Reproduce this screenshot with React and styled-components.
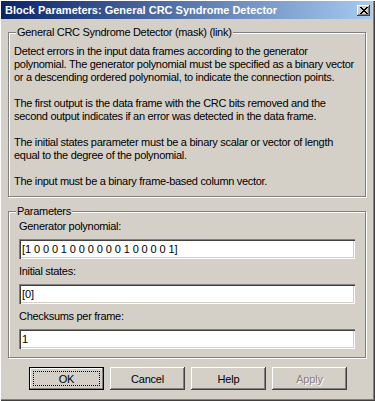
import React from 'react';
import styled, { createGlobalStyle } from 'styled-components';

const GlobalStyle = createGlobalStyle`
  html, body {
    margin: 0;
    padding: 0;
    background: #d4d0c8;
  }
  * {
    box-sizing: border-box;
  }
`;

const FONT = `"Liberation Sans", Arial, sans-serif`;

const Window = styled.div`
  width: 375px;
  height: 401px;
  display: flex;
  flex-direction: column;
  padding: 1px 3px 2px 1px;
  background: #d4d0c8;
  box-shadow: inset 1px 1px 0 #fff, inset -1px -1px 0 #404040, inset -2px -2px 0 #808080;
  font: 11px/13px ${FONT};
  letter-spacing: -0.3px;
  color: #000;
`;

const TitleBar = styled.div`
  height: 18px;
  display: flex;
  align-items: center;
  justify-content: space-between;
  padding: 0 2px 0 4px;
  background: linear-gradient(to right, #0a246a, #a6caf0);
`;

const Title = styled.span`
  color: #fff;
  font: bold 11px/13px ${FONT};
  letter-spacing: 0;
  white-space: nowrap;
`;

const CloseButton = styled.div`
  width: 13px;
  height: 11px;
  display: flex;
  align-items: center;
  justify-content: center;
  background: #d4d0c8;
  box-shadow: inset -1px -1px 0 #404040, inset 1px 1px 0 #fff, inset -2px -2px 0 #808080;
`;

const Body = styled.div`
  flex: 1;
  display: flex;
  flex-direction: column;
  padding: 13px 6px 0 7px;
`;

const Group = styled.div`
  position: relative;
  margin-top: ${p => p.$gap || 0}px;
  padding: ${p => p.$pad};
  border: 1px solid #808080;
  box-shadow: inset 1px 1px 0 #fff, 1px 1px 0 #fff;
`;

const Legend = styled.span`
  position: absolute;
  top: -7px;
  left: 7px;
  padding: 0 1px;
  background: #d4d0c8;
  white-space: nowrap;
`;

const Para = styled.p`
  margin: 0 0 13px;
  white-space: nowrap;
  &:last-child {
    margin-bottom: 0;
  }
`;

const Field = styled.div`
  display: flex;
  flex-direction: column;
  gap: 6px;
  margin-bottom: 6px;
  &:last-child {
    margin-bottom: 0;
  }
`;

const Label = styled.label`
  white-space: nowrap;
`;

const TextInput = styled.input`
  width: 100%;
  height: 20px;
  margin: 0;
  padding: 0 3px;
  border: none;
  outline: none;
  background: #fff;
  font: 11px ${FONT};
  letter-spacing: -0.1px;
  color: #000;
  box-shadow: inset 1px 1px 0 #808080, inset 2px 2px 0 #404040, inset -1px -1px 0 #fff, inset -2px -2px 0 #d4d0c8;
`;

const ButtonRow = styled.div`
  display: flex;
  justify-content: center;
  gap: 6px;
  margin-top: 9px;
  padding-left: 2px;
`;

const Button = styled.button`
  position: relative;
  width: 75px;
  height: 23px;
  margin: 0;
  padding: 0;
  border: none;
  background: #d4d0c8;
  font: 11px ${FONT};
  letter-spacing: -0.2px;
  color: ${p => (p.disabled ? '#808080' : '#000')};
  text-shadow: ${p => (p.disabled ? '1px 1px 0 #fff' : 'none')};
  box-shadow: ${p =>
    p.$default
      ? 'inset 0 0 0 1px #000, inset -2px -2px 0 #808080, inset 2px 2px 0 #fff'
      : 'inset -1px -1px 0 #404040, inset 1px 1px 0 #fff, inset -2px -2px 0 #808080'};

  &::after {
    content: '';
    display: ${p => (p.$default ? 'block' : 'none')};
    position: absolute;
    inset: 4px;
    border: 1px dotted #000;
  }
`;

const paragraphs = [
  [
    'Detect errors in the input data frames according to the generator',
    'polynomial. The generator polynomial must be specified as a binary vector',
    'or a descending ordered polynomial, to indicate the connection points.',
  ],
  [
    'The first output is the data frame with the CRC bits removed and the',
    'second output indicates if an error was detected in the data frame.',
  ],
  [
    'The initial states parameter must be a binary scalar or vector of length',
    'equal to the degree of the polynomial.',
  ],
  ['The input must be a binary frame-based column vector.'],
];

const params = [
  { label: 'Generator polynomial:', value: '[1 0 0 0 1 0 0 0 0 0 0 1 0 0 0 0 1]' },
  { label: 'Initial states:', value: '[0]' },
  { label: 'Checksums per frame:', value: '1' },
];

const App = () => {
  return (
    <>
      <GlobalStyle />
      <Window>
        <TitleBar>
          <Title>Block Parameters: General CRC Syndrome Detector</Title>
          <CloseButton>
            <svg width="8" height="7" viewBox="0 0 8 7">
              <path d="M0 0h2v1h1v1h2V1h1V0h2v1H7v1H6v1H5v1h1v1h1v1h1v1H6V6H5V5H3v1H2v1H0V6h1V5h1V4h1V3H2V2H1V1H0z" fill="#000" />
            </svg>
          </CloseButton>
        </TitleBar>
        <Body>
          <Group $pad="12px 5px 8px 5px">
            <Legend>General CRC Syndrome Detector (mask) (link)</Legend>
            {paragraphs.map((lines, i) => (
              <Para key={i}>
                {lines.map((line, j) => (
                  <React.Fragment key={j}>
                    {j > 0 && <br />}
                    {line}
                  </React.Fragment>
                ))}
              </Para>
            ))}
          </Group>
          <Group $gap={14} $pad="8px 10px 8px 10px">
            <Legend>Parameters</Legend>
            {params.map(p => (
              <Field key={p.label}>
                <Label>{p.label}</Label>
                <TextInput defaultValue={p.value} />
              </Field>
            ))}
          </Group>
          <ButtonRow>
            <Button $default>OK</Button>
            <Button>Cancel</Button>
            <Button>Help</Button>
            <Button disabled>Apply</Button>
          </ButtonRow>
        </Body>
      </Window>
    </>
  );
};

export default App;
